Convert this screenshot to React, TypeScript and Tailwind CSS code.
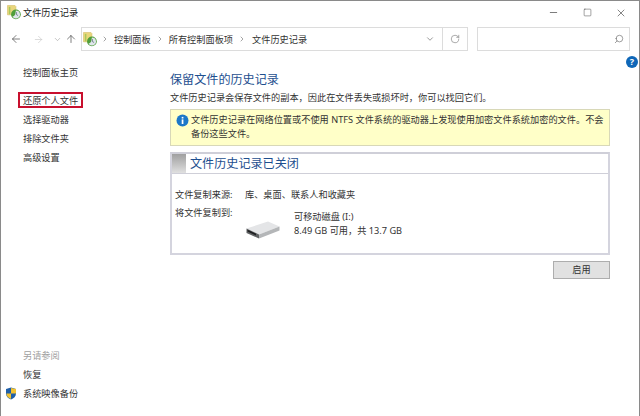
import { ArrowLeft, ArrowRight, ArrowUp, ChevronDown, ChevronRight, RotateCw, Search, Minus, Square, X } from "lucide-react";

function HistoryIcon({ size = 16 }: { size?: number }) {
  return (
    <svg width={size} height={size} viewBox="0 0 16 16" className="shrink-0">
      <path d="M0.5 0.5h8l1 1v9h-9z" fill="#e9d67c" stroke="#d2bb62" strokeWidth="0.6" />
      <path d="M2 2h1.6v8H2z" fill="#a9c85a" />
      <circle cx="9.5" cy="10" r="5.2" fill="#4f9e3a" />
      <path d="M9.5 5.8a4.3 4.3 0 1 1-3.7 6.4c1.4-.2 2.6-1.2 3-2.6z" fill="#dfe6ea" />
      <path d="M10 7.6v2.6l1.8 1" fill="none" stroke="#62727e" strokeWidth="0.9" />
    </svg>
  );
}

function ShieldIcon() {
  return (
    <svg width="12" height="13" viewBox="0 0 12 13" className="shrink-0">
      <path d="M6 0.5 11 2v4.5c0 3-2.2 5-5 6-2.8-1-5-3-5-6V2z" fill="#1f5fa8" />
      <path d="M6 1v5.5h5V2z" fill="#f2c230" />
      <path d="M6 6.5V12c-2.6-1-4.6-2.8-4.6-5.5z" fill="#f2c230" />
    </svg>
  );
}

function DriveIcon() {
  return (
    <svg width="34" height="18" viewBox="0 0 34 18" className="shrink-0">
      <path d="M0.5 7.5 22 0.5 33.5 5.5 13 13.5z" fill="#e4e5e7" />
      <path d="M13 13.5 33.5 5.5v4L13 17.5z" fill="#b4b6b8" />
      <path d="M0.5 7.5 13 13.5v4L0.5 12z" fill="#5f6163" />
      <path d="M1.5 8.8 10 12.8v1.6L1.5 10.6z" fill="#1d1e20" />
    </svg>
  );
}

const sideLinks = ["选择驱动器", "排除文件夹", "高级设置"];

export default function App() {
  return (
    <div
      className="w-[640px] h-[416px] bg-white border-x border-t border-[#8a8a8a] flex flex-col overflow-hidden text-[9.2px] leading-[13px] text-[#333]"
      style={{ fontFamily: '"Noto Sans", "Noto Sans CJK SC", sans-serif' }}
    >
      {/* title bar */}
      <div className="h-[23px] flex items-center pl-[6px] shrink-0">
        <HistoryIcon size={15} />
        <span className="ml-[1px] text-[#222]">文件历史记录</span>
        <div className="ml-auto flex items-center text-[#333]">
          <span className="w-[34px] flex justify-center"><Minus size={11} strokeWidth={1.4} /></span>
          <span className="w-[34px] flex justify-center"><Square size={9} strokeWidth={1.2} /></span>
          <span className="w-[34px] mr-[1px] flex justify-center"><X size={12} strokeWidth={1.2} /></span>
        </div>
      </div>

      {/* nav row */}
      <div className="h-[24px] mt-[3px] flex items-center shrink-0">
        <div className="w-[80px] flex items-center text-[#555] pl-[9px]">
          <ArrowLeft size={12} strokeWidth={1.5} />
          <ArrowRight size={11} strokeWidth={1.3} className="ml-[11px] text-[#c4c4c4]" />
          <ChevronDown size={9} strokeWidth={1.5} className="ml-[9px] text-[#9a9a9a]" />
          <ArrowUp size={12} strokeWidth={1.5} className="ml-[3px]" />
        </div>
        <div className="w-[387px] h-[24px] border border-[#dcdcdc] flex items-center pl-[1px] text-[#333]">
          <HistoryIcon size={15} />
          <ChevronRight size={8} className="ml-[3px] text-[#777]" />
          <span className="ml-[5px]">控制面板</span>
          <ChevronRight size={8} className="ml-[5px] text-[#777]" />
          <span className="ml-[5px]">所有控制面板项</span>
          <ChevronRight size={8} className="ml-[5px] text-[#777]" />
          <span className="ml-[6px]">文件历史记录</span>
          <div className="ml-auto flex items-center h-full">
            <ChevronDown size={10} strokeWidth={1.6} className="mr-[7px] text-[#666]" />
            <div className="w-[25px] h-full border-l border-[#dcdcdc] flex items-center justify-center">
              <RotateCw size={10} strokeWidth={1.3} className="text-[#666]" />
            </div>
          </div>
        </div>
        <div className="ml-[9px] w-[153px] h-[24px] border border-[#dcdcdc] flex items-center justify-end pr-[5px]">
          <Search size={10} strokeWidth={1.5} className="text-[#666] -scale-x-100" />
        </div>
      </div>

      {/* body */}
      <div className="flex flex-1 min-h-0">
        <aside className="w-[169px] shrink-0 flex flex-col pl-[22px] pt-[15px] pb-[16px]">
          <a>控制面板主页</a>
          <div className="mt-[13px] -ml-[5px] w-[65px] h-[16px] border-2 border-[#c8102e] flex items-center pl-[3px]">
            还原个人文件
          </div>
          <div className="mt-[5px] flex flex-col gap-[6px]">
            {sideLinks.map((l) => (
              <a key={l}>{l}</a>
            ))}
          </div>
          <div className="mt-auto flex flex-col">
            <span className="text-[#a0a0a0]">另请参阅</span>
            <a className="mt-[6px]">恢复</a>
            <div className="mt-[6px] flex items-center -ml-[18px]">
              <ShieldIcon />
              <span className="ml-[6px]">系统映像备份</span>
            </div>
          </div>
        </aside>

        <main className="w-[440px] pt-[21px]">
          <h1 className="text-[12.1px] leading-[16px] font-normal text-[#1e4f8f]">保留文件的历史记录</h1>
          <p className="mt-[3px]">文件历史记录会保存文件的副本，因此在文件丢失或损坏时，你可以找回它们。</p>
          <div className="mt-[5px] h-[37px] bg-[#ffffc8] border border-[#d8d8b8] flex pl-[5px] pt-[3px]">
            <svg width="13" height="13" viewBox="0 0 13 13" className="shrink-0 mt-[1px]">
              <circle cx="6.5" cy="6.5" r="6" fill="#1c78c8" />
              <rect x="5.7" y="5.4" width="1.7" height="4.6" fill="#fff" />
              <rect x="5.7" y="2.9" width="1.7" height="1.6" fill="#fff" />
            </svg>
            <p className="ml-[2px] w-[416px] leading-[14px]">
              文件历史记录在网络位置或不使用 NTFS 文件系统的驱动器上发现使用加密文件系统加密的文件。不会备份这些文件。
            </p>
          </div>
          <section className="mt-[6px] h-[103px] border-2 border-[#d4d4de] border-t-[#cfcfd8] flex flex-col">
            <div className="h-[20px] flex border-b border-[#cfcfd8] shrink-0">
              <div className="w-[14px] bg-gradient-to-b from-[#a0a0a0] to-[#e0e0e0]" />
              <h2 className="ml-[4px] text-[12.1px] leading-[19px] font-normal text-[#1e4f8f]">文件历史记录已关闭</h2>
            </div>
            <div className="pl-[3px] pt-[14px] flex flex-col">
              <div className="flex">
                <span className="w-[70px]">文件复制来源:</span>
                <span>库、桌面、联系人和收藏夹</span>
              </div>
              <div className="mt-[5px] flex">
                <span className="w-[71px]">将文件复制到:</span>
                <div className="mt-[15px]">
                  <DriveIcon />
                </div>
                <div className="ml-[14px] mt-[4px] flex flex-col leading-[14px]">
                  <span>可移动磁盘 (I:)</span>
                  <span>8.49 GB 可用，共 13.7 GB</span>
                </div>
              </div>
            </div>
          </section>
          <div className="mt-[6px] flex justify-end">
            <button className="w-[57px] h-[18px] bg-[#e1e1e1] border border-[#adadad] leading-none">启用</button>
          </div>
        </main>

        <div className="relative flex-1">
          <span className="absolute right-[1px] top-[5px] w-[12px] h-[12px] rounded-full bg-[#0f67b8] text-white text-[9px] font-bold leading-[12px] text-center">?</span>
        </div>
      </div>
    </div>
  );
}
